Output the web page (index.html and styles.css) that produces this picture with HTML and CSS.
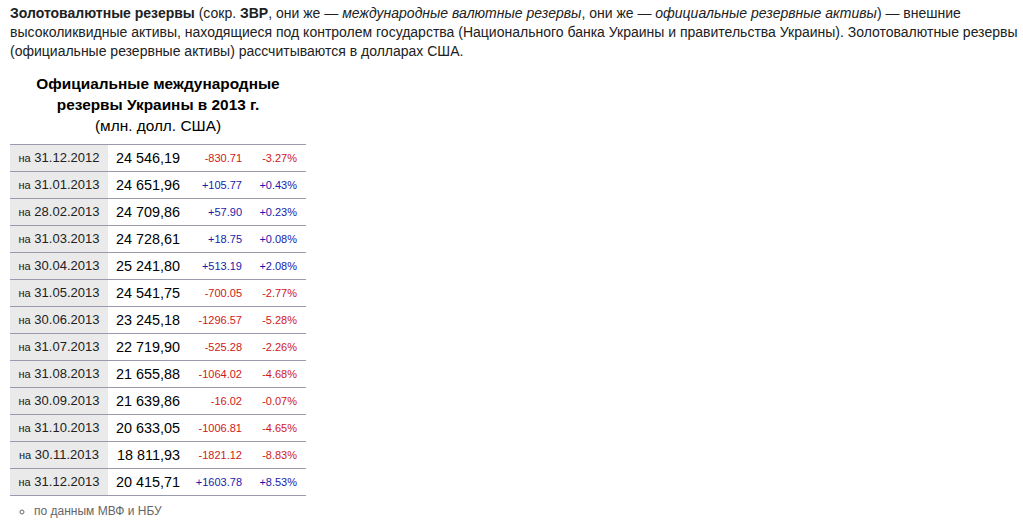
FILE: index.html
```html
<!DOCTYPE html>
<html lang="ru">
<head>
<meta charset="utf-8">
<link rel="stylesheet" href="styles.css">
</head>
<body>
<p class="intro"><b>Золотовалютные резервы</b> (сокр. <b>ЗВР</b>, они же — <i>международные валютные резервы</i>, они же — <i>официальные резервные активы</i>) — внешние высоколиквидные активы, находящиеся под контролем государства (Национального банка Украины и правительства Украины). Золотовалютные резервы (официальные резервные активы) рассчитываются в долларах США.</p>
<table class="reserves">
<caption><b>Официальные международные резервы Украины в 2013 г.</b><br>(млн. долл. США)</caption>
<tbody>
<tr><td class="date"><small>на</small> 31.12.2012</td><td class="val">24 546,19</td><td class="d neg">-830.71</td><td class="p neg">-3.27%</td></tr>
<tr><td class="date"><small>на</small> 31.01.2013</td><td class="val">24 651,96</td><td class="d pos">+105.77</td><td class="p pos">+0.43%</td></tr>
<tr><td class="date"><small>на</small> 28.02.2013</td><td class="val">24 709,86</td><td class="d pos">+57.90</td><td class="p pos">+0.23%</td></tr>
<tr><td class="date"><small>на</small> 31.03.2013</td><td class="val">24 728,61</td><td class="d pos">+18.75</td><td class="p pos">+0.08%</td></tr>
<tr><td class="date"><small>на</small> 30.04.2013</td><td class="val">25 241,80</td><td class="d pos">+513.19</td><td class="p pos">+2.08%</td></tr>
<tr><td class="date"><small>на</small> 31.05.2013</td><td class="val">24 541,75</td><td class="d neg">-700.05</td><td class="p neg">-2.77%</td></tr>
<tr><td class="date"><small>на</small> 30.06.2013</td><td class="val">23 245,18</td><td class="d neg">-1296.57</td><td class="p neg">-5.28%</td></tr>
<tr><td class="date"><small>на</small> 31.07.2013</td><td class="val">22 719,90</td><td class="d neg">-525.28</td><td class="p neg">-2.26%</td></tr>
<tr><td class="date"><small>на</small> 31.08.2013</td><td class="val">21 655,88</td><td class="d neg">-1064.02</td><td class="p neg">-4.68%</td></tr>
<tr><td class="date"><small>на</small> 30.09.2013</td><td class="val">21 639,86</td><td class="d neg">-16.02</td><td class="p neg">-0.07%</td></tr>
<tr><td class="date"><small>на</small> 31.10.2013</td><td class="val">20 633,05</td><td class="d neg">-1006.81</td><td class="p neg">-4.65%</td></tr>
<tr><td class="date"><small>на</small> 30.11.2013</td><td class="val">18 811,93</td><td class="d neg">-1821.12</td><td class="p neg">-8.83%</td></tr>
<tr><td class="date"><small>на</small> 31.12.2013</td><td class="val">20 415,71</td><td class="d pos">+1603.78</td><td class="p pos">+8.53%</td></tr>
</tbody>
</table>
<ul class="notes"><li>по данным МВФ и НБУ</li></ul>
</body>
</html>
```
FILE: styles.css
```css
body {
  margin: 0;
  padding: 4px 5px 0 10px;
  font-family: "Liberation Sans", Arial, sans-serif;
  font-size: 14px;
  line-height: 19px;
  color: #202122;
  background: #fff;
}
.intro {
  margin: 0 0 12px 0;
}
.reserves {
  border-collapse: collapse;
  width: 296px;
}
.reserves caption {
  font-size: 15.4px;
  line-height: 21px;
  padding-bottom: 8px;
  text-align: center;
  color: #000;
}
.reserves td {
  border-top: 1px solid #9a9aae;
  border-bottom: 1px solid #9a9aae;
  height: 26px;
  padding: 0;
  vertical-align: middle;
  white-space: nowrap;
}
.reserves .date {
  width: 98px;
  background: #eaeaea;
  text-align: center;
  font-size: 13px;
  color: #202122;
}
.reserves .date small {
  font-size: 11px;
}
.reserves .val {
  width: 80px;
  text-align: right;
  padding-right: 8px;
  box-sizing: border-box;
  font-size: 14.4px;
  color: #000;
}
.reserves .d {
  width: 63px;
  text-align: right;
  padding-right: 9px;
  box-sizing: border-box;
  font-size: 11px;
}
.reserves .p {
  text-align: right;
  padding-right: 9px;
  font-size: 11px;
}
.neg { color: #d01818; }
.pos { color: #1a1aaa; }
.notes {
  margin: 7px 0 0 0;
  padding-left: 24px;
  list-style: circle;
  font-size: 12px;
  line-height: 16px;
  color: #666;
}
```
